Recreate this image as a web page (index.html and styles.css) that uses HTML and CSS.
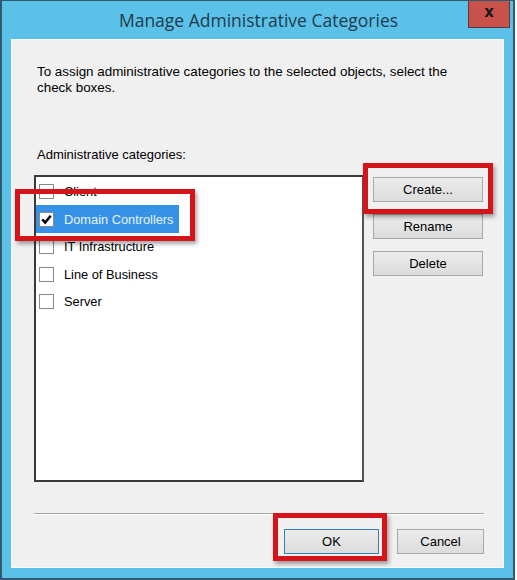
FILE: index.html
```html
<!DOCTYPE html>
<html>
<head>
<meta charset="utf-8">
<link rel="stylesheet" href="styles.css">
</head>
<body>
<div class="window">
  <div class="titlebar">
    <span></span>
    <div class="title">Manage Administrative Categories</div>
    <div class="close-cell"><div class="close">x</div></div>
  </div>
  <div class="client">
    <p class="intro">To assign administrative categories to the selected objects, select the check boxes.</p>
    <div class="label">Administrative categories:</div>
    <div class="main">
      <div class="listbox">
        <div class="row"><span class="item"><span class="cb"></span><span>Client</span></span></div>
        <div class="row"><span class="item selected"><span class="cb checked"><svg viewBox="0 0 13 13" width="13" height="13"><path d="M2.3 6.3 L5.2 9.6 L10.7 2.8" fill="none" stroke="#000" stroke-width="2.5"/></svg></span><span>Domain Controllers</span></span></div>
        <div class="row"><span class="item"><span class="cb"></span><span>IT Infrastructure</span></span></div>
        <div class="row"><span class="item"><span class="cb"></span><span>Line of Business</span></span></div>
        <div class="row"><span class="item"><span class="cb"></span><span>Server</span></span></div>
      </div>
      <div class="side">
        <button class="btn">Create...</button>
        <button class="btn">Rename</button>
        <button class="btn">Delete</button>
      </div>
    </div>
    <div class="sep"></div>
    <div class="footer">
      <button class="btn ok">OK</button>
      <button class="btn cancel">Cancel</button>
    </div>
  </div>
  <div class="mark mark-dc"></div>
  <div class="mark mark-create"></div>
  <div class="mark mark-ok"></div>
</div>
</body>
</html>
```

FILE: styles.css
```css
html, body {
  margin: 0;
  padding: 0;
  background: #fff;
}
.window {
  position: relative;
  box-sizing: border-box;
  width: 515px;
  height: 580px;
  background: #5cc1e8;
  border: 2px solid #2f5b70;
  border-top-width: 1px;
  padding: 0 9px 10px 9px;
  display: flex;
  flex-direction: column;
  font-family: "Liberation Sans", Arial, sans-serif;
}
.titlebar {
  height: 38px;
  display: grid;
  grid-template-columns: 1fr auto 1fr;
  align-items: start;
}
.title {
  font-family: "Open Sans", "Noto Sans", sans-serif;
  font-size: 17.5px;
  color: #1d3b4c;
  margin-top: 7px;
  margin-left: 2px;
}
.close-cell {
  display: flex;
  justify-content: flex-end;
  margin-right: -6px;
}
.close {
  width: 40px;
  height: 26px;
  background: #c8524b;
  border: 1px solid #5a3a3a;
  border-top: none;
  color: #1a1a1a;
  font-family: "DejaVu Sans", sans-serif;
  font-weight: bold;
  font-size: 15px;
  line-height: 22px;
  text-align: center;
}
.client {
  flex: 1;
  background: #f0f0f0;
  border: 1px solid #fafafa;
  padding: 0 19px 0 22px;
  display: flex;
  flex-direction: column;
  font-size: 12.8px;
  color: #000;
}
.intro {
  margin: 24px 0 0 3px;
  line-height: 16px;
  font-size: 13.4px;
  width: 420px;
}
.label {
  margin: 51px 0 0 3px;
  line-height: 16px;
  font-size: 13px;
}
.main {
  display: flex;
  gap: 9px;
  margin-top: 12px;
}
.listbox {
  width: 326px;
  height: 302px;
  background: #fff;
  border: 2px solid #3a3a3a;
  border-right-color: #555;
  padding-top: 1px;
  box-sizing: content-box;
}
.row {
  height: 27.5px;
  display: flex;
  align-items: center;
}
.item {
  display: inline-flex;
  align-items: center;
  height: 28px;
  padding: 0 5px 0 3px;
  gap: 10px;
}
.item.selected {
  background: #3592e6;
  color: #e6f2ff;
}
.cb {
  width: 13px;
  height: 13px;
  border: 1px solid #8a8a8a;
  background: #fff;
  display: inline-block;
  flex: none;
}
.cb svg { display: block; }
.side {
  display: flex;
  flex-direction: column;
  gap: 12px;
  padding-top: 2px;
}
.btn {
  box-sizing: border-box;
  width: 110px;
  height: 25px;
  font-family: "Liberation Sans", Arial, sans-serif;
  font-size: 13px;
  color: #000;
  background: linear-gradient(#ececec, #dcdcdc);
  border: 1px solid #a8a8a8;
  padding: 0;
}
.sep {
  height: 1px;
  background: #a8a8a8;
  border-bottom: 1px solid #fff;
  margin: 31px 0 0 0;
}
.footer {
  display: flex;
  justify-content: flex-end;
  gap: 18px;
  margin-top: 14px;
}
.btn.ok {
  width: 95px;
  border-color: #3a7fb5;
}
.btn.cancel {
  width: 87px;
}
.mark {
  position: absolute;
  border: 5px solid #d5131b;
  box-shadow: 2px 3px 4px rgba(0,0,0,0.35);
  box-sizing: border-box;
}
.mark-dc { left: 13px; top: 188px; width: 180px; height: 52px; }
.mark-create { left: 361px; top: 162px; width: 130px; height: 51px; }
.mark-ok { left: 271px; top: 512px; width: 114px; height: 48px; }
```
